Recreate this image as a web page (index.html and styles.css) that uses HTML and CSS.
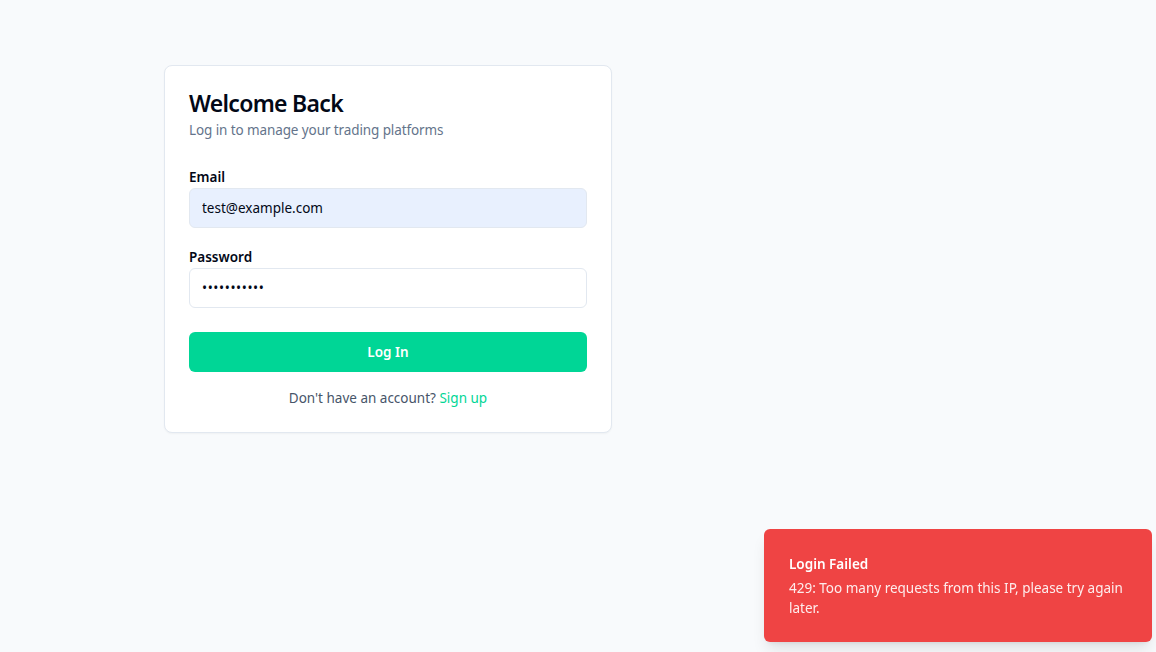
FILE: index.html
```html
<!DOCTYPE html>
<html lang="en">
<head>
<meta charset="utf-8">
<title>Log In</title>
<link rel="stylesheet" href="styles.css">
</head>
<body>
<main class="page">
  <section class="card">
    <header class="card-head">
      <h1 class="title">Welcome Back</h1>
      <p class="subtitle">Log in to manage your trading platforms</p>
    </header>
    <form class="form">
      <div class="field">
        <label class="label" for="email">Email</label>
        <input class="input input-filled" id="email" type="email" value="test@example.com">
      </div>
      <div class="field">
        <label class="label" for="password">Password</label>
        <input class="input input-pass" id="password" type="password" value="password123">
      </div>
      <button class="btn" type="button">Log In</button>
    </form>
    <p class="footer">Don't have an account? <a class="link" href="#">Sign up</a></p>
  </section>
</main>
<div class="toast" role="alert">
  <div class="toast-title">Login Failed</div>
  <div class="toast-desc">429: Too many requests from this IP, please try again later.</div>
</div>
</body>
</html>
```
FILE: styles.css
```css
* { box-sizing: border-box; }
html, body { margin: 0; padding: 0; }
body {
  background: #f8fafc;
  font-family: "Noto Sans", "Open Sans", sans-serif;
  color: #020817;
  width: 1156px;
  height: 652px;
  overflow: hidden;
}
.page {
  display: flex;
  padding: 65px 0 0 164px;
}
.card {
  width: 448px;
  background: #ffffff;
  border: 1px solid #e2e8f0;
  border-radius: 8px;
  padding: 24px 24px 24px;
  box-shadow: 0 1px 2px rgba(0,0,0,0.04);
}
.card-head { display: flex; flex-direction: column; gap: 4px; }
.title {
  margin: 0;
  font-size: 23px;
  line-height: 26px;
  font-weight: 600;
  letter-spacing: -0.7px;
  color: #020817;
}
.subtitle {
  margin: 0;
  font-size: 13.5px;
  line-height: 20px;
  color: #64748b;
  letter-spacing: -0.1px;
}
.form {
  display: flex;
  flex-direction: column;
  margin-top: 30px;
}
.field { display: flex; flex-direction: column; gap: 4px; }
.field + .field { margin-top: 22px; }
.label {
  font-size: 13.5px;
  line-height: 14px;
  font-weight: 600;
  color: #020817;
}
.input {
  height: 40px;
  width: 100%;
  border: 1px solid #e2e8f0;
  border-radius: 6px;
  padding: 0 12px;
  font-family: inherit;
  font-size: 13.5px;
  color: #020817;
  background: #ffffff;
}
.input-filled { background: #e8f0fe; }
.input-pass { letter-spacing: 0.6px; }
.btn {
  margin-top: 24px;
  height: 40px;
  width: 100%;
  border: 0;
  border-radius: 6px;
  background: #00d696;
  color: #ffffff;
  font-family: inherit;
  font-size: 13.5px;
  font-weight: 600;
}
.footer {
  margin: 16px 0 0;
  text-align: center;
  font-size: 13.5px;
  line-height: 20px;
  color: #475569;
}
.link { color: #00d696; text-decoration: none; }
.toast {
  position: fixed;
  right: 4px;
  bottom: 10px;
  width: 388px;
  padding: 25px 24px 24px 25px;
  background: #ef4444;
  color: #ffffff;
  border-radius: 6px;
  box-shadow: 0 10px 15px -3px rgba(0,0,0,0.1), 0 4px 6px -4px rgba(0,0,0,0.1);
}
.toast-title {
  font-size: 13.5px;
  line-height: 20px;
  font-weight: 600;
}
.toast-desc {
  margin-top: 4px;
  font-size: 13.5px;
  line-height: 20px;
  opacity: 0.9;
}
```
